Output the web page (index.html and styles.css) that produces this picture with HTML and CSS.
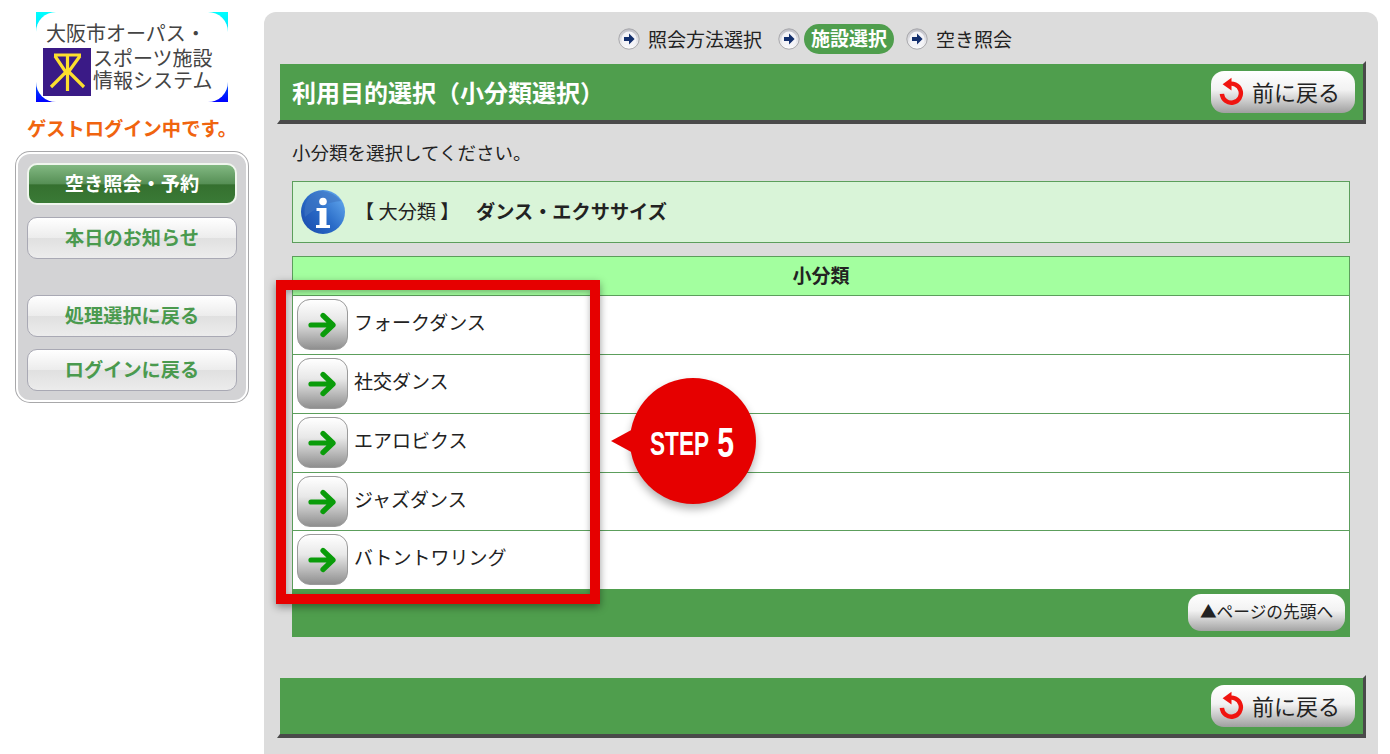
FILE: index.html
```html
<!DOCTYPE html>
<html lang="ja">
<head>
  <meta charset="UTF-8" />
  <meta name="viewport" content="width=device-width, initial-scale=1.0"/>
  <title>大阪市オーパス・スポーツ施設情報システム</title>
  <link rel="stylesheet" href="styles.css">
</head>
<body>
  <svg class="sprite" width="0" height="0">
    <defs>
      <linearGradient id="navDot" x1="0" y1="0" x2="0" y2="1">
        <stop offset="0" stop-color="#bcbcc4"/>
        <stop offset="1" stop-color="#ffffff"/>
      </linearGradient>
      <symbol id="navIcon" viewBox="0 0 22 22">
        <circle cx="11" cy="11" r="10.2" fill="url(#navDot)" stroke="#a8a8ac" stroke-width="1"/>
        <circle cx="11" cy="11" r="7.6" fill="#f4f4f8"/>
        <path d="M6 9h5V5.6L16.6 11 11 16.4V13H6z" fill="#14306e"/>
      </symbol>
      <symbol id="undoIcon" viewBox="0 0 26 28">
        <path d="M8.5 7.5a9.5 9.5 0 1 1-5.6 9.4" fill="none" stroke="#f01410" stroke-width="4.4"/>
        <path d="M12.5 0.8v12.6L3.6 7.2z" fill="#f01410"/>
      </symbol>
      <symbol id="goIcon" viewBox="0 0 30 26">
        <path d="M3 13h22M15 3.5 25 13 15 22.5" fill="none" stroke="#0a9c0a" stroke-width="5.2" stroke-linecap="round" stroke-linejoin="round"/>
      </symbol>
    </defs>
  </svg>

  <div class="page">
    <aside class="side">
      <div class="logo">
        <div class="logo-inner">
          <div class="logo-line">大阪市オーパス・</div>
          <div class="logo-row">
            <svg class="emblem" viewBox="0 0 48 48">
              <rect width="48" height="48" fill="#3a1a86"/>
              <path d="M11 7h27M12 8l12 18L37 8M24.500 7v36M24 23 8 39M25 23l16 16" fill="none" stroke="#fce02e" stroke-width="3.200"/>
            </svg>
            <div class="logo-lines">
              <div>スポーツ施設</div>
              <div>情報システム</div>
            </div>
          </div>
        </div>
      </div>
      <p class="guest">ゲストログイン中です。</p>
      <nav class="menu">
        <a class="menu-btn active">空き照会・予約</a>
        <a class="menu-btn">本日のお知らせ</a>
        <a class="menu-btn spaced">処理選択に戻る</a>
        <a class="menu-btn">ログインに戻る</a>
      </nav>
    </aside>

    <main class="main">
      <div class="steps">
        <svg class="step-icon"><use href="#navIcon"/></svg>
        <span class="step">照会方法選択</span>
        <svg class="step-icon next"><use href="#navIcon"/></svg>
        <span class="step current">施設選択</span>
        <svg class="step-icon after"><use href="#navIcon"/></svg>
        <span class="step">空き照会</span>
      </div>

      <div class="bar">
        <h1>利用目的選択（小分類選択）</h1>
        <a class="back-btn"><svg class="undo"><use href="#undoIcon"/></svg>前に戻る</a>
      </div>

      <p class="lead">小分類を選択してください。</p>

      <div class="info">
        <svg class="info-icon" viewBox="0 0 44 44">
          <defs>
            <linearGradient id="infoFill" x1="0.1" y1="0.9" x2="0.9" y2="0.2">
              <stop offset="0" stop-color="#1c4fb0"/>
              <stop offset="0.5" stop-color="#2a6cc8"/>
              <stop offset="1" stop-color="#5a9fe8"/>
            </linearGradient>
          </defs>
          <circle cx="22" cy="22" r="22" fill="url(#infoFill)"/>
          <path d="M4 27C12 20 24 12 40 11 34 3 24 1 18 1 8 3 2 14 4 27z" fill="#3f74c2" opacity="0.6"/>
          <circle cx="22" cy="11.5" r="3.8" fill="#fff"/>
          <path d="M15.5 18h10v17h3.5v3H15v-3h3.5V21h-3z" fill="#fff"/>
        </svg>
        <span class="info-label">【 大分類 】</span>
        <strong>ダンス・エクササイズ</strong>
      </div>

      <table class="list">
        <thead>
          <tr><th>小分類</th></tr>
        </thead>
        <tbody>
          <tr><td><div class="item"><a class="go-btn"><svg class="go"><use href="#goIcon"/></svg></a><span>フォークダンス</span></div></td></tr>
          <tr><td><div class="item"><a class="go-btn"><svg class="go"><use href="#goIcon"/></svg></a><span>社交ダンス</span></div></td></tr>
          <tr><td><div class="item"><a class="go-btn"><svg class="go"><use href="#goIcon"/></svg></a><span>エアロビクス</span></div></td></tr>
          <tr><td><div class="item"><a class="go-btn"><svg class="go"><use href="#goIcon"/></svg></a><span>ジャズダンス</span></div></td></tr>
          <tr><td><div class="item"><a class="go-btn"><svg class="go"><use href="#goIcon"/></svg></a><span>バトントワリング</span></div></td></tr>
        </tbody>
      </table>

      <div class="list-foot">
        <a class="top-btn">▲ページの先頭へ</a>
      </div>

      <div class="bar bar-bottom">
        <a class="back-btn"><svg class="undo"><use href="#undoIcon"/></svg>前に戻る</a>
      </div>

      <!-- 説明用の注釈 -->
      <div class="frame"></div>
      <div class="callout">
        <span class="callout-text"><span class="callout-step">STEP</span> <span class="callout-num">5</span></span>
      </div>
    </main>
  </div>
</body>
</html>
```

FILE: styles.css
```css
* {
  box-sizing: border-box;
}

html, body {
  margin: 0;
  height: 100%;
}

body {
  font-family: "Noto Sans CJK JP", "Liberation Sans", sans-serif;
  color: #222;
  background: #fff;
  overflow: hidden;
}

.sprite {
  position: absolute;
}

.page {
  display: flex;
  min-height: 100%;
}

/* Sidebar */
.side {
  width: 264px;
  flex: none;
  padding: 12px 15px 0 16px;
}

.logo {
  width: 192px;
  height: 90px;
  margin-left: 20px;
  background: linear-gradient(to bottom, #00ffff, #00c0ff 50%, #0000ff);
}

.logo-inner {
  height: 100%;
  padding: 5px 0 0 7px;
  background: #fff;
  border-radius: 20px;
  color: #444;
  font-size: 20px;
  line-height: 31px;
}

.logo-line {
  margin-left: 3px;
  white-space: nowrap;
}

.logo-row {
  display: flex;
  gap: 2px;
}

.emblem {
  width: 48px;
  height: 48px;
  flex: none;
}

.logo-lines {
  margin-top: -1px;
  line-height: 22px;
  white-space: nowrap;
}

.guest {
  margin: 14px 0 0;
  width: 232px;
  text-align: center;
  color: #f0640f;
  font-size: 19.3px;
  font-weight: bold;
  line-height: 24px;
  white-space: nowrap;
}

.menu {
  margin-top: 12px;
  width: 232px;
  height: 250px;
  padding: 9px;
  display: flex;
  flex-direction: column;
  gap: 12px;
  background: #d3d3d5;
  border: 2px solid #fff;
  border-radius: 14px;
  box-shadow: 0 0 0 1px #a8a8aa;
}

.menu-btn {
  height: 42px;
  padding-bottom: 3px;
  display: flex;
  align-items: center;
  justify-content: center;
  border: 1px solid #a9a9b4;
  border-radius: 10px;
  background: linear-gradient(to bottom, #fff, #ececec 50%, #e0e0e0 50%, #ececec);
  color: #4a9a4e;
  font-size: 19.2px;
  font-weight: bold;
}

.menu-btn.active {
  border: 2px solid #f0f6ee;
  background: linear-gradient(to bottom, #82b882, #568f55 50%, #35702f 52%, #3a7a36);
  color: #fff;
}

.menu-btn.spaced {
  margin-top: 24px;
}

/* Main panel */
.main {
  position: relative;
  width: 1114px;
  margin-top: 12px;
  padding-bottom: 16px;
  background: #dcdcdc;
  border-radius: 12px 12px 0 0;
}

.steps {
  height: 49px;
  padding: 5px 12px 0 0;
  display: flex;
  align-items: center;
  justify-content: center;
  font-size: 19px;
}

.step-icon {
  width: 22px;
  height: 22px;
  margin-right: 8px;
}

.step-icon.next {
  margin-left: 16px;
  margin-right: 4px;
}

.step-icon.after {
  margin-left: 12px;
}

.step {
  position: relative;
  top: -1px;
}

.step.current {
  top: 0;
  padding: 0 7px;
  height: 30px;
  line-height: 28px;
  border-radius: 15px;
  background: #4f9e4d;
  color: #fff;
  font-weight: bold;
}

.bar {
  height: 63px;
  margin: 0 12px 0 13px;
  padding: 0 8px 0 12px;
  display: flex;
  align-items: center;
  justify-content: space-between;
  background: #4f9e4d;
  background-clip: padding-box;
  border-style: solid;
  border-width: 3px 3px 4px;
  border-color: transparent #4a4a4a #4a4a4a transparent;
}

.bar h1 {
  margin: 0;
  color: #fff;
  font-size: 24px;
  font-weight: bold;
  line-height: 30px;
}

.bar-bottom {
  justify-content: flex-end;
  margin-top: 38px;
}

.back-btn {
  width: 144px;
  height: 42px;
  padding: 0 0 2px 8px;
  display: flex;
  align-items: center;
  gap: 7px;
  border-radius: 13px;
  background: linear-gradient(to bottom, #fff, #f2f2f2 45%, #a0a0a0);
  color: #222;
  font-size: 22px;
  white-space: nowrap;
}

.undo {
  width: 26px;
  height: 28px;
  flex: none;
}

.lead {
  margin: 0 28px;
  padding: 15px 0 16px;
  font-size: 18.5px;
  line-height: 26px;
}

.info {
  height: 62px;
  margin: 0 28px 13px;
  padding-left: 8px;
  display: flex;
  align-items: center;
  background: #d9f4d8;
  border: 1px solid #5c9e5c;
  font-size: 19.2px;
}

.info-icon {
  width: 44px;
  height: 44px;
  margin-right: 10px;
  flex: none;
}

.info-label {
  width: 121px;
  padding-bottom: 3px;
  white-space: pre;
}

.info strong {
  padding-bottom: 3px;
}

.list {
  width: 1058px;
  margin: 0 28px;
  border-collapse: collapse;
  background: #fff;
}

.list th {
  height: 39px;
  padding: 0 0 3px;
  background: #a3ff9f;
  border: 1px solid #5c9e5c;
  font-size: 19px;
}

.list td {
  height: 59px;
  padding: 3px 0 0 4px;
  vertical-align: top;
  border: 1px solid #5c9e5c;
}

.list tbody tr:nth-child(4) td {
  height: 58px;
}

.item {
  display: flex;
  align-items: center;
  gap: 6px;
  font-size: 19px;
}

.item span {
  position: relative;
  top: -3px;
}

.go-btn {
  width: 51px;
  height: 51px;
  display: flex;
  align-items: center;
  justify-content: center;
  border: 1px solid #9a9a9a;
  border-radius: 13px;
  background: linear-gradient(to bottom, #fff, #e8e8e8 40%, #8f8f8f);
}

.go {
  width: 30px;
  height: 26px;
}

.list-foot {
  height: 48px;
  margin: -1px 28px 0;
  padding: 5px 5px 0 0;
  display: flex;
  justify-content: flex-end;
  background: #4f9e4d;
}

.top-btn {
  width: 157px;
  height: 37px;
  padding-bottom: 3px;
  display: flex;
  align-items: center;
  justify-content: center;
  border-radius: 13px;
  background: linear-gradient(to bottom, #fff, #f2f2f2 45%, #a4a4a4);
  color: #222;
  font-size: 16.7px;
  white-space: nowrap;
}

/* Annotation overlay */
.frame {
  position: absolute;
  left: 12px;
  top: 268px;
  width: 324px;
  height: 324px;
  border: 10px solid #e60000;
  box-shadow: 0 3px 8px rgba(0, 0, 0, 0.4), inset 0 2px 6px rgba(0, 0, 0, 0.3);
}

.callout {
  position: absolute;
  left: 366px;
  top: 366px;
  width: 126px;
  height: 126px;
  display: flex;
  align-items: center;
  justify-content: flex-start;
  background: #e60000;
  border-radius: 50%;
  box-shadow: 0 5px 8px rgba(0, 0, 0, 0.3);
}

.callout::before {
  content: "";
  position: absolute;
  left: -19px;
  top: 50%;
  margin-top: -13px;
  border-style: solid;
  border-width: 13px 24px 13px 0;
  border-color: transparent #e60000 transparent transparent;
}

.callout-text {
  display: flex;
  align-items: center;
  gap: 6px;
  margin: 3px 0 0 20px;
  color: #fff;
  font-family: "Liberation Sans", sans-serif;
  font-weight: bold;
  line-height: 1;
}

.callout-step {
  display: inline-block;
  width: 58px;
  font-size: 34px;
  transform: scaleX(0.665);
  transform-origin: left center;
  white-space: nowrap;
}

.callout-num {
  font-size: 42px;
  transform: scaleX(0.72);
}
```
